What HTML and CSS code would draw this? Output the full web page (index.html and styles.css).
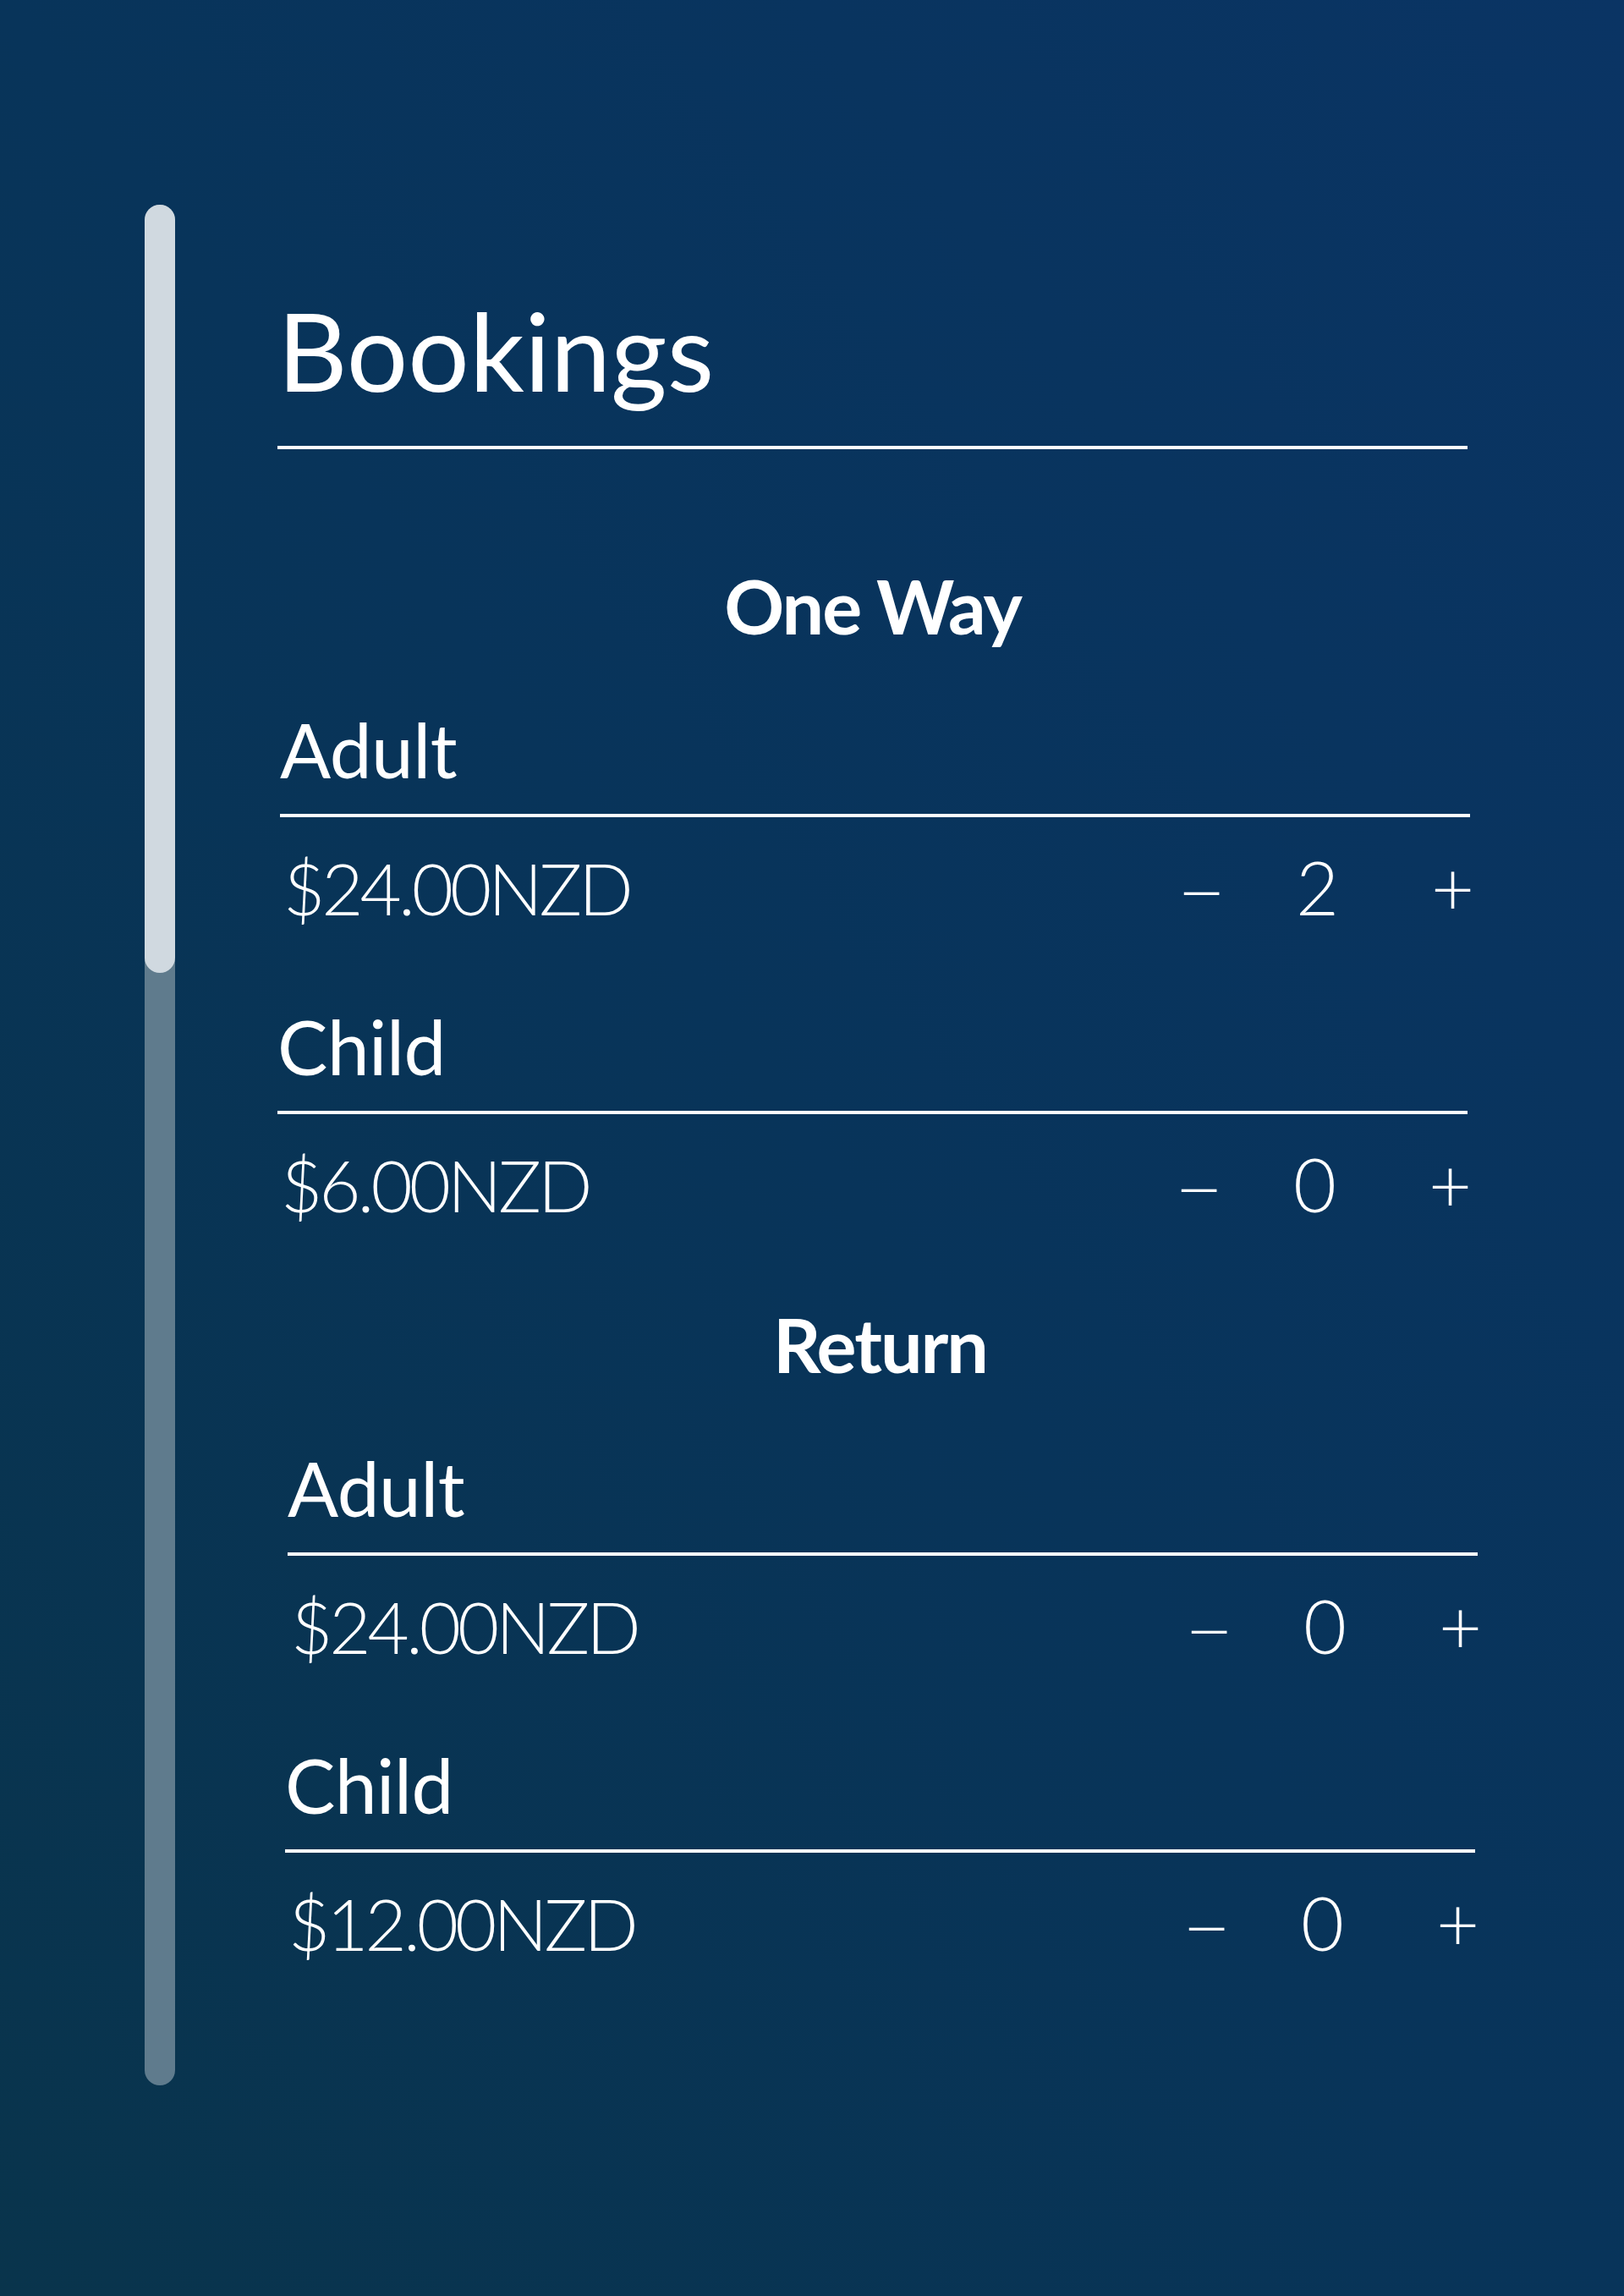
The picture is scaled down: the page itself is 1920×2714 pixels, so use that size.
FILE: index.html
```html
<!DOCTYPE html>
<html lang="en">
<head>
<meta charset="utf-8">
<title>Bookings</title>
<link rel="stylesheet" href="styles.css">
</head>
<body>
<div class="page">
  <div class="scrollbar"><div class="scrollbar-thumb"></div></div>
  <main class="panel">
    <h1 class="title">Bookings</h1>

    <section class="section">
      <h2 class="section-title">One Way</h2>
      <div class="item item--shift">
        <div class="item-label">Adult</div>
        <div class="item-row">
          <span class="price">$24.00NZD</span>
          <div class="stepper">
            <span class="step">–</span>
            <span class="count">2</span>
            <span class="step">+</span>
          </div>
        </div>
      </div>
      <div class="item">
        <div class="item-label">Child</div>
        <div class="item-row">
          <span class="price">$6.00NZD</span>
          <div class="stepper">
            <span class="step">–</span>
            <span class="count">0</span>
            <span class="step">+</span>
          </div>
        </div>
      </div>
    </section>

    <section class="section section--return">
      <h2 class="section-title">Return</h2>
      <div class="item item--shift">
        <div class="item-label">Adult</div>
        <div class="item-row">
          <span class="price">$24.00NZD</span>
          <div class="stepper">
            <span class="step">–</span>
            <span class="count">0</span>
            <span class="step">+</span>
          </div>
        </div>
      </div>
      <div class="item">
        <div class="item-label">Child</div>
        <div class="item-row">
          <span class="price">$12.00NZD</span>
          <div class="stepper">
            <span class="step">–</span>
            <span class="count">0</span>
            <span class="step">+</span>
          </div>
        </div>
      </div>
    </section>
  </main>
</div>
</body>
</html>
```

FILE: styles.css
```css
* {
  box-sizing: border-box;
}

html, body {
  margin: 0;
  padding: 0;
}

body {
  font-family: "Lato", "Noto Sans", sans-serif;
  color: #ffffff;
  background: linear-gradient(to bottom left, #0a3464 0%, #08345a 50%, #09344c 100%);
  min-height: 2714px;
}

.page {
  display: flex;
  align-items: flex-start;
  padding: 242px 0 0 171px;
  min-height: 2714px;
}

.scrollbar {
  flex: 0 0 36px;
  width: 36px;
  height: 2223px;
  border-radius: 18px;
  background: #5f7b8d;
}

.scrollbar-thumb {
  height: 908px;
  border-radius: 18px;
  background: #d0d9e0;
}

.panel {
  width: 1407px;
  margin-left: 121px;
  padding-top: 108px;
  display: flex;
  flex-direction: column;
}

.title {
  margin: 0;
  font-size: 128px;
  line-height: 128px;
  font-weight: 400;
  padding-bottom: 49px;
  border-bottom: 4px solid #ffffff;
}

.section {
  display: flex;
  flex-direction: column;
  margin-top: 141px;
}

.section--return {
  margin-top: 101px;
  margin-left: 9px;
  margin-right: -9px;
}

.section-title {
  margin: 0 0 80px;
  text-align: center;
  font-size: 88px;
  line-height: 89px;
  font-weight: 700;
  letter-spacing: -2px;
}

.item + .item {
  margin-top: 99px;
}

.item--shift {
  margin-left: 3px;
  margin-right: -3px;
}

.item-label {
  font-size: 89px;
  line-height: 89px;
  font-weight: 400;
  letter-spacing: -0.5px;
  padding-bottom: 32px;
  border-bottom: 4px solid #ffffff;
}

.item-row {
  display: flex;
  align-items: baseline;
  justify-content: space-between;
  margin-top: 38px;
  font-size: 88px;
  line-height: 88px;
  font-weight: 300;
}

.price {
  padding-left: 4px;
  font-size: 85px;
  letter-spacing: -4px;
}

.stepper {
  display: flex;
  align-items: baseline;
  padding-right: 6px;
}

.step,
.count {
  width: 40px;
  text-align: center;
}

.step:first-child {
  display: inline-block;
  transform: scaleX(1.2);
}

.count {
  margin: 0 120px 0 98px;
}
```
